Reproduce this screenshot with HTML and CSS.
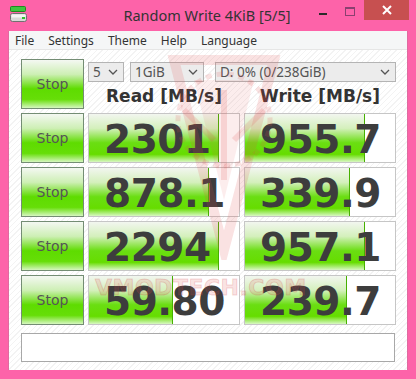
FILE: index.html
```html
<!DOCTYPE html>
<html lang="en">
<head>
    <meta charset="UTF-8">
    <title>Random Write 4KiB [5/5]</title>
    <link rel="stylesheet" href="styles.css">
</head>
<body>
    <div class="window">
        <div class="titlebar">
            <svg class="app-icon" width="17" height="17" viewBox="0 0 17 17">
                <rect x="0.5" y="0.5" width="15" height="5" rx="1" fill="#3fc43f" stroke="#1e8a1e"/>
                <rect x="0.5" y="7.5" width="16" height="8" rx="2" fill="#d8d8d8" stroke="#707070"/>
                <rect x="1.5" y="8.5" width="14" height="3" fill="#f4f4f4"/>
                <rect x="12" y="11" width="3" height="2" fill="#2fbf2f"/>
            </svg>
            <div class="title">Random Write 4KiB [5/5]</div>
            <div class="controls">
                <span class="ctl-min"></span>
                <span class="ctl-max"></span>
                <span class="ctl-close">
                    <svg width="10" height="10" viewBox="0 0 10 10">
                        <path d="M1 1 L9 9 M9 1 L1 9" stroke="#fff" stroke-width="2"/>
                    </svg>
                </span>
            </div>
        </div>

        <div class="client">
            <div class="menu">
                <span>File</span>
                <span>Settings</span>
                <span>Theme</span>
                <span>Help</span>
                <span>Language</span>
            </div>

            <div class="main">
                <div class="board">
                    <button class="stop">Stop</button>
                    <div class="top-right">
                        <div class="combos">
                            <div class="combo combo-count">5<svg class="chev" width="10" height="6" viewBox="0 0 10 6"><path d="M1 1 L5 5 L9 1" fill="none" stroke="#555" stroke-width="1.3"/></svg></div>
                            <div class="combo combo-size">1GiB<svg class="chev" width="10" height="6" viewBox="0 0 10 6"><path d="M1 1 L5 5 L9 1" fill="none" stroke="#555" stroke-width="1.3"/></svg></div>
                            <div class="combo combo-drive">D: 0% (0/238GiB)<svg class="chev" width="10" height="6" viewBox="0 0 10 6"><path d="M1 1 L5 5 L9 1" fill="none" stroke="#555" stroke-width="1.3"/></svg></div>
                        </div>
                        <div class="heads">
                            <div class="head">Read [MB/s]</div>
                            <div class="head">Write [MB/s]</div>
                        </div>
                    </div>

                    <button class="stop">Stop</button>
                    <div class="cell"><div class="fill" style="width: 86%"></div><span class="val">2301</span></div>
                    <div class="cell"><div class="fill" style="width: 79%"></div><span class="val">955.7</span></div>

                    <button class="stop">Stop</button>
                    <div class="cell"><div class="fill" style="width: 79%"></div><span class="val">878.1</span></div>
                    <div class="cell"><div class="fill" style="width: 69%"></div><span class="val">339.9</span></div>

                    <button class="stop">Stop</button>
                    <div class="cell"><div class="fill" style="width: 86%"></div><span class="val">2294</span></div>
                    <div class="cell"><div class="fill" style="width: 79%"></div><span class="val">957.1</span></div>

                    <button class="stop">Stop</button>
                    <div class="cell"><div class="fill" style="width: 55%"></div><span class="val">59.80</span></div>
                    <div class="cell"><div class="fill" style="width: 67%"></div><span class="val">239.7</span></div>
                </div>

                <div class="status"></div>

                <!-- watermark over the board -->
                <svg class="wm-logo" width="140" height="210" viewBox="0 0 140 210">
                    <path d="M20 10 L120 10 L70 200 Z" fill="none" stroke="#e04a4a" stroke-width="10" opacity="0.16"/>
                    <path d="M40 30 L100 30 L70 150 Z" fill="#e04a4a" opacity="0.1"/>
                    <circle cx="70" cy="70" r="46" fill="none" stroke="#e04a4a" stroke-width="5" stroke-dasharray="6 5" opacity="0.16"/>
                    <path d="M30 60 L60 90 M110 60 L80 90 M70 40 L70 130" stroke="#e04a4a" stroke-width="6" opacity="0.16"/>
                </svg>
                <div class="wm-text">VMODTECH.COM</div>
            </div>
        </div>
    </div>
</body>
</html>
```

FILE: styles.css
```css
body {
    margin: 0;
    background: #fd63a9;
    font-family: "Noto Sans", "DejaVu Sans", sans-serif;
}
.window {
    width: 416px;
    height: 379px;
    background: #fd63a9;
}
.titlebar {
    height: 31px;
    display: flex;
    align-items: flex-start;
    position: relative;
}
.app-icon {
    margin: 6px 0 0 10px;
}
.title {
    flex: 1;
    text-align: center;
    font-size: 14.5px;
    color: #333;
    padding-top: 5px;
    padding-left: 68px;
}
.controls {
    display: flex;
    align-items: flex-start;
    margin-right: 7px;
}
.ctl-min {
    width: 8px;
    height: 2px;
    background: #2a2a2a;
    margin: 13px 18px 0 0;
}
.ctl-max {
    width: 8px;
    height: 6px;
    border: 1px solid #8a4070;
    border-top-width: 2px;
    margin: 7px 9px 0 0;
}
.ctl-close {
    width: 45px;
    height: 20px;
    background: #c75050;
    display: flex;
    align-items: center;
    justify-content: center;
}
.client {
    margin: 0 8px;
    height: 339px;
    background: repeating-linear-gradient(135deg, #ffffff 0 3px, #f3f3f3 3px 4px);
    border-left: 1px solid #e06aa0;
    border-right: 1px solid #e06aa0;
    box-sizing: border-box;
}
.menu {
    height: 18px;
    background: #f5f6f7;
    border-bottom: 1px solid #e6e6e6;
    display: flex;
    gap: 14px;
    padding-left: 6px;
    font-size: 12px;
    color: #333;
    line-height: 19px;
}
.main {
    position: relative;
    padding: 9px 12px 0;
}
.board {
    display: grid;
    grid-template-columns: 63px 152px 152px;
    grid-auto-rows: 50px;
    gap: 4px;
}
.stop {
    margin: 0;
    padding: 0;
    border: 1px solid #748d74;
    background: linear-gradient(#f4f8f2 0%, #cdefb4 30%, #5edc00 60%, #66de08 82%, #d6f7c0 100%);
    font-family: "DejaVu Sans", sans-serif;
    font-size: 14px;
    color: #555;
}
.top-right {
    grid-column: 2 / 4;
    display: flex;
    flex-direction: column;
}
.combos {
    display: flex;
    margin-top: 3px;
}
.combo {
    height: 20px;
    box-sizing: border-box;
    border: 1px solid #b4b4b4;
    background: #ececec;
    font-size: 13.5px;
    color: #555;
    line-height: 18px;
    padding-left: 4px;
    display: flex;
    align-items: center;
    justify-content: space-between;
}
.chev {
    margin-right: 5px;
}
.combo-count {
    width: 36px;
}
.combo-size {
    width: 74px;
    margin-left: 6px;
}
.combo-drive {
    width: 181px;
    margin-left: 11px;
}
.heads {
    display: grid;
    grid-template-columns: 152px 152px;
    gap: 4px;
    margin-top: 4px;
}
.head {
    text-align: center;
    font-family: "DejaVu Sans", sans-serif;
    font-weight: bold;
    font-size: 17px;
    color: #333;
}
.cell {
    position: relative;
    border: 1px solid #c6c6c6;
    background: #fff;
    display: flex;
    align-items: center;
}
.fill {
    position: absolute;
    left: 0;
    top: 0;
    bottom: 0;
    border-right: 1px solid #46b000;
    background: linear-gradient(#f2f6ef 0%, #d4f0bc 30%, #6ade12 60%, #66dd00 84%, #d9f8c4 100%);
}
.val {
    position: relative;
    padding-left: 15px;
    font-family: "DejaVu Sans", sans-serif;
    font-weight: bold;
    font-size: 39px;
    color: #3d3d3d;
    line-height: 1;
    margin-top: 2px;
    letter-spacing: -0.5px;
}
.status {
    margin-top: 8px;
    height: 29px;
    border: 1px solid #a8a8a8;
    background: #fff;
    box-sizing: border-box;
}
.wm-logo {
    position: absolute;
    left: 145px;
    top: 0;
    pointer-events: none;
}
.wm-text {
    position: absolute;
    left: 86px;
    top: 225px;
    font-family: "DejaVu Sans", sans-serif;
    font-weight: bold;
    font-size: 22px;
    color: rgba(224, 80, 80, 0.18);
    -webkit-text-stroke: 1px rgba(200, 60, 60, 0.2);
    letter-spacing: 0.5px;
    pointer-events: none;
}
```
